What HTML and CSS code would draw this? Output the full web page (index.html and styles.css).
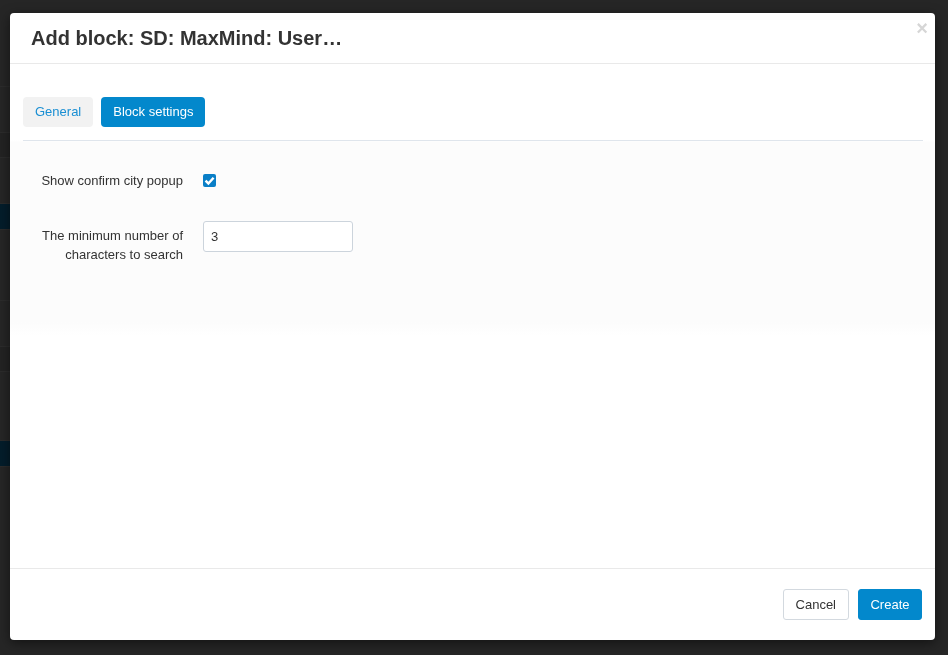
FILE: index.html
```html
<!DOCTYPE html>
<html lang="en">
<head>
    <meta charset="UTF-8">
    <meta name="viewport" content="width=device-width, initial-scale=1.0">
    <title>Add block</title>
    <link rel="stylesheet" href="styles.css">
</head>
<body>
    <div class="page">
        <div class="page-row title"></div>
        <div class="page-row"></div>
        <div class="page-row dark"></div>
        <div class="page-row"></div>
        <div class="page-row blue"></div>
        <div class="page-row tall"></div>
        <div class="page-row"></div>
        <div class="page-row dark"></div>
        <div class="page-row tall short"></div>
        <div class="page-row blue"></div>
    </div>

    <div class="backdrop">
        <div class="modal">
            <div class="modal-header">
                <h3>Add block: SD: MaxMind: User…</h3>
                <span class="close">×</span>
            </div>

            <div class="modal-body">
                <div class="tabs">
                    <span class="tab">General</span>
                    <span class="tab active">Block settings</span>
                </div>

                <div class="tab-content">
                    <div class="form-row">
                        <label class="form-label">Show confirm city popup</label>
                        <span class="checkbox">
                            <svg width="11" height="11" viewBox="0 0 10 10"><path d="M1.4 5.1 L4 7.7 L8.7 2.5" fill="none" stroke="#fff" stroke-width="2.2"/></svg>
                        </span>
                    </div>
                    <div class="form-row top">
                        <label class="form-label">The minimum number of characters to search</label>
                        <input type="text" value="3">
                    </div>
                </div>
            </div>

            <div class="modal-footer">
                <button class="btn">Cancel</button>
                <button class="btn primary">Create</button>
            </div>
        </div>
    </div>
</body>
</html>
```

FILE: styles.css
```css
/* Halaman di belakang modal */
body {
    margin: 0;
    background-color: #262626;
    font-family: "Liberation Sans", Arial, sans-serif;
    font-size: 13px;
    color: #333;
    height: 655px;
    overflow: hidden;
}

.page {
    width: 10px;
}

.page-row {
    height: 45px;
    border-bottom: 1px solid #2c2c2c;
}

.page-row.title {
    height: 86px;
}

.page-row.dark {
    background: #232323;
    height: 24px;
}

.page-row.blue {
    background: #041d2b;
    height: 25px;
}

.page-row.tall {
    height: 70px;
}

.page-row.tall.short {
    height: 68px;
}

/* Lapisan modal */
.backdrop {
    position: fixed;
    inset: 0;
    padding: 13px 13px 15px 10px;
    display: flex;
}

.modal {
    flex: 1;
    background: #fff;
    border-radius: 4px;
    box-shadow: 0 3px 12px rgba(0, 0, 0, 0.5);
    display: flex;
    flex-direction: column;
}

.modal-header {
    height: 50px;
    border-bottom: 1px solid #e9e9e9;
    padding: 0 8px 0 21px;
    display: flex;
    align-items: center;
    justify-content: space-between;
}

.modal-header h3 {
    margin: 0;
    font-size: 20px;
    font-weight: bold;
    color: #333;
}

.close {
    align-self: flex-start;
    margin-top: 4px;
    margin-right: -1px;
    font-size: 20px;
    font-weight: bold;
    color: #d6d6d6;
}

.modal-body {
    flex: 1;
    padding: 33px 12px 0 13px;
    background: linear-gradient(#fff 76px, #fcfcfc 78px, #fcfcfc 258px, #fff 272px);
}

.tabs {
    display: flex;
    gap: 8px;
    padding-bottom: 13px;
    border-bottom: 1px solid #dfe5ec;
}

.tab {
    height: 30px;
    line-height: 30px;
    padding: 0 12px;
    border-radius: 4px;
    background: #f2f2f2;
    color: #1a8fd3;
}

.tab.active {
    background: #0388cc;
    color: #fff;
}

.tab-content {
    padding-top: 30px;
}

.form-row {
    display: flex;
    align-items: center;
    gap: 20px;
    min-height: 18px;
}

.form-row.top {
    align-items: flex-start;
    margin-top: 31px;
}

.form-label {
    width: 160px;
    text-align: right;
    line-height: 19px;
}

.form-row.top .form-label {
    padding-top: 5px;
}

.checkbox {
    width: 13px;
    height: 13px;
    border-radius: 2px;
    background: #0a7fc7;
    display: flex;
    align-items: center;
    justify-content: center;
}

input[type="text"] {
    width: 150px;
    height: 31px;
    box-sizing: border-box;
    border: 1px solid #ccd4dc;
    border-radius: 3px;
    padding: 0 7px;
    font-family: inherit;
    font-size: 13px;
    color: #333;
}

.modal-footer {
    border-top: 1px solid #e9e9e9;
    padding: 20px 13px 20px;
    display: flex;
    justify-content: flex-end;
    gap: 9px;
}

.btn {
    height: 31px;
    padding: 0 12px;
    border: 1px solid #d3d9df;
    border-radius: 3px;
    background: #fff;
    color: #333;
    font-family: inherit;
    font-size: 13px;
}

.btn.primary {
    width: 64px;
    padding: 0;
    background: #0388cc;
    border-color: #0388cc;
    color: #fff;
}
```
